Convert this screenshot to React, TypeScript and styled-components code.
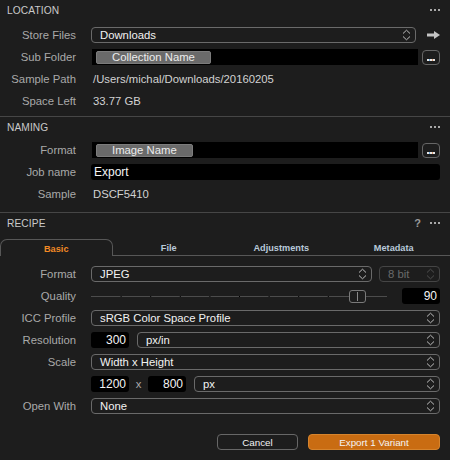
import styled, { createGlobalStyle } from "styled-components";

const GlobalStyle = createGlobalStyle`
  html, body {
    margin: 0;
    padding: 0;
    background: #1d1d1d;
  }
  body {
    font-family: "Liberation Sans", Arial, sans-serif;
    -webkit-font-smoothing: antialiased;
  }
  * {
    box-sizing: border-box;
  }
`;

const Panel = styled.div`
  width: 450px;
  height: 460px;
  background: #1d1d1d;
  display: flex;
  flex-direction: column;
  overflow: hidden;
`;

const Section = styled.section<{ $padBottom: number; $first?: boolean }>`
  border-top: ${(p) => (p.$first ? "none" : "1px solid #464646")};
  padding-bottom: ${(p) => p.$padBottom}px;
`;

const SectionHeader = styled.div`
  height: 20px;
  display: flex;
  align-items: center;
  justify-content: space-between;
  padding: 0 10px 0 7px;
`;

const SectionTitle = styled.span`
  font-size: 10.2px;
  color: #c9c9c9;
  letter-spacing: 0.1px;
`;

const HeaderIcons = styled.div`
  display: flex;
  align-items: center;
  gap: 9px;
`;

const Help = styled.span`
  font-size: 11px;
  font-weight: bold;
  color: #9a9a9a;
`;

const Rows = styled.div<{ $padTop: number }>`
  display: flex;
  flex-direction: column;
  gap: 6px;
  padding: ${(p) => p.$padTop}px 10px 0 0;
`;

const Row = styled.div`
  display: grid;
  grid-template-columns: 76px 1fr;
  column-gap: 15px;
  height: 16px;
  align-items: center;
`;

const Label = styled.span`
  text-align: right;
  font-size: 11.3px;
  color: #a9a9a9;
  white-space: nowrap;
`;

const Controls = styled.div<{ $gap?: number; $inset?: number }>`
  flex: 1 1 auto;
  display: flex;
  align-items: center;
  gap: ${(p) => p.$gap ?? 0}px;
  margin-left: ${(p) => p.$inset ?? 0}px;
  height: 16px;
  min-width: 0;
`;

const Value = styled.span`
  font-size: 11.3px;
  color: #d2d2d2;
  padding-left: 2px;
  white-space: nowrap;
`;

const SelectBox = styled.div<{ $width?: number; $disabled?: boolean }>`
  flex: ${(p) => (p.$width ? `0 0 ${p.$width}px` : "1 1 auto")};
  height: 16px;
  border: 1px solid ${(p) => (p.$disabled ? "#454545" : "#6a6a6a")};
  border-radius: 4px;
  display: flex;
  align-items: center;
  justify-content: space-between;
  padding: 0 4px 0 8px;
  font-size: 11.3px;
  color: ${(p) => (p.$disabled ? "#6a6a6a" : "#f2f2f2")};
  white-space: nowrap;
  min-width: 0;
`;

const Field = styled.div<{ $width?: number; $align?: "left" | "right" }>`
  flex: ${(p) => (p.$width ? `0 0 ${p.$width}px` : "1 1 auto")};
  height: 16px;
  background: #000;
  border-radius: 3px;
  display: flex;
  align-items: center;
  justify-content: ${(p) => (p.$align === "right" ? "flex-end" : "flex-start")};
  padding: 0 3px;
  font-size: 12px;
  color: #f4f4f4;
  white-space: nowrap;
`;

const TokenField = styled.div`
  flex: 1 1 auto;
  height: 16px;
  background: #000;
  display: flex;
  align-items: center;
  padding: 0 4px;
  margin-left: 1px;
`;

const Token = styled.span`
  height: 13px;
  display: inline-flex;
  align-items: center;
  padding: 0 15px;
  background: #6a6a6a;
  border: 1px solid #7c7c7c;
  border-radius: 2px;
  font-size: 11.3px;
  color: #ececec;
  white-space: nowrap;
`;

const MoreButton = styled.div`
  flex: 0 0 18px;
  height: 15px;
  border: 1px solid #666;
  border-radius: 4px;
  display: flex;
  align-items: flex-end;
  justify-content: center;
  padding-bottom: 3px;
`;

const IconSlot = styled.div`
  flex: 0 0 24px;
  display: flex;
  justify-content: flex-end;
  align-items: center;
`;

const TabBar = styled.div`
  margin-top: 6px;
  display: grid;
  grid-template-columns: repeat(4, 1fr);
  height: 17px;
`;

const Tab = styled.div<{ $active?: boolean }>`
  display: flex;
  align-items: center;
  justify-content: center;
  font-size: 9.2px;
  font-weight: bold;
  color: ${(p) => (p.$active ? "#f28a25" : "#b8c9da")};
  border: ${(p) => (p.$active ? "1px solid #575757" : "none")};
  border-bottom: ${(p) => (p.$active ? "none" : "1px solid #575757")};
  border-radius: ${(p) => (p.$active ? "7px 7px 0 0" : "0")};
  padding-top: 1px;
`;

const SliderTrack = styled.div`
  flex: 1 1 auto;
  height: 16px;
  position: relative;
  display: flex;
  align-items: center;
`;

const Thumb = styled.div`
  position: absolute;
  top: 2px;
  width: 17px;
  height: 13px;
  border: 1px solid #7a7a7a;
  border-radius: 3px;
  background: #1d1d1d;
  display: flex;
  justify-content: center;
  align-items: center;

  &::after {
    content: "";
    width: 1px;
    height: 9px;
    background: #8a8a8a;
  }
`;

const Times = styled.span`
  flex: 0 0 19px;
  text-align: center;
  font-size: 11.3px;
  color: #a9a9a9;
`;

const Footer = styled.div`
  margin-top: 20px;
  display: flex;
  justify-content: flex-end;
  gap: 10px;
  padding-right: 10px;
`;

const Button = styled.div<{ $primary?: boolean }>`
  width: ${(p) => (p.$primary ? 132 : 81)}px;
  height: 16px;
  border-radius: 4px;
  border: 1px solid ${(p) => (p.$primary ? "#d6842d" : "#676767")};
  background: ${(p) => (p.$primary ? "#c96c12" : "transparent")};
  display: flex;
  align-items: center;
  justify-content: center;
  font-size: 9.8px;
  color: #f4f4f4;
`;

const Dots = () => (
  <svg width="10" height="2" viewBox="0 0 10 2">
    <rect x="0" y="0" width="2" height="2" fill="#a8a8a8" />
    <rect x="4" y="0" width="2" height="2" fill="#a8a8a8" />
    <rect x="8" y="0" width="2" height="2" fill="#a8a8a8" />
  </svg>
);

const Chevrons = ({ color = "#bdbdbd" }: { color?: string }) => (
  <svg width="9" height="12" viewBox="0 0 9 12">
    <path d="M1 4.5 L4.5 1.2 L8 4.5 M1 7.5 L4.5 10.8 L8 7.5" fill="none" stroke={color} strokeWidth="1" />
  </svg>
);

const ArrowRight = () => (
  <svg width="13" height="8" viewBox="0 0 13 8">
    <path d="M0 2.5 H7 V0 L13 4 L7 8 V5.5 H0 Z" fill="#c4c4c4" />
  </svg>
);

const Ellipsis = () => (
  <svg width="8" height="2" viewBox="0 0 8 2">
    <rect x="0" y="0" width="8" height="2" fill="#e8e8e8" />
    <rect x="2" y="0" width="1" height="2" fill="#6fa8d8" />
    <rect x="5" y="0" width="1" height="2" fill="#d89a6f" />
  </svg>
);

const SliderLine = ({ ticks }: { ticks: number }) => (
  <svg width="100%" height="3" preserveAspectRatio="none" viewBox="0 0 296 3">
    <rect x="0" y="1" width="296" height="1" fill="#4c4c4c" />
    {Array.from({ length: ticks }, (_, i) => (
      <rect key={i} x={29.6 * (i + 1)} y="1" width="1" height="1" fill="#000" />
    ))}
  </svg>
);

const Select = ({ value, width, disabled }: { value: string; width?: number; disabled?: boolean }) => (
  <SelectBox $width={width} $disabled={disabled}>
    <span>{value}</span>
    <Chevrons color={disabled ? "#4e4e4e" : "#bdbdbd"} />
  </SelectBox>
);

const tabs = ["Basic", "File", "Adjustments", "Metadata"];

const App = () => {
  const quality = 90;
  const thumbPos = (quality - 6) / 96.4;

  return (
    <Panel>
      <GlobalStyle />

      <Section $first $padBottom={7}>
        <SectionHeader>
          <SectionTitle>LOCATION</SectionTitle>
          <HeaderIcons>
            <Dots />
          </HeaderIcons>
        </SectionHeader>
        <Rows $padTop={7}>
          <Row>
            <Label>Store Files</Label>
            <Controls>
              <Select value="Downloads" />
              <IconSlot>
                <ArrowRight />
              </IconSlot>
            </Controls>
          </Row>
          <Row>
            <Label>Sub Folder</Label>
            <Controls $gap={4}>
              <TokenField>
                <Token>Collection Name</Token>
              </TokenField>
              <MoreButton>
                <Ellipsis />
              </MoreButton>
            </Controls>
          </Row>
          <Row>
            <Label>Sample Path</Label>
            <Value>/Users/michal/Downloads/20160205</Value>
          </Row>
          <Row>
            <Label>Space Left</Label>
            <Value>33.77 GB</Value>
          </Row>
        </Rows>
      </Section>

      <Section $padBottom={10}>
        <SectionHeader>
          <SectionTitle>NAMING</SectionTitle>
          <HeaderIcons>
            <Dots />
          </HeaderIcons>
        </SectionHeader>
        <Rows $padTop={5}>
          <Row>
            <Label>Format</Label>
            <Controls $gap={4}>
              <TokenField>
                <Token>Image Name</Token>
              </TokenField>
              <MoreButton>
                <Ellipsis />
              </MoreButton>
            </Controls>
          </Row>
          <Row>
            <Label>Job name</Label>
            <Controls>
              <Field>Export</Field>
            </Controls>
          </Row>
          <Row>
            <Label>Sample</Label>
            <Value>DSCF5410</Value>
          </Row>
        </Rows>
      </Section>

      <Section $padBottom={0}>
        <SectionHeader>
          <SectionTitle>RECIPE</SectionTitle>
          <HeaderIcons>
            <Help>?</Help>
            <Dots />
          </HeaderIcons>
        </SectionHeader>
        <TabBar>
          {tabs.map((t, i) => (
            <Tab key={t} $active={i === 0}>
              {t}
            </Tab>
          ))}
        </TabBar>
        <Rows $padTop={10}>
          <Row>
            <Label>Format</Label>
            <Controls $gap={7}>
              <Select value="JPEG" />
              <Select value="8 bit" width={61} disabled />
            </Controls>
          </Row>
          <Row>
            <Label>Quality</Label>
            <Controls $gap={15}>
              <SliderTrack>
                <SliderLine ticks={8} />
                <Thumb style={{ left: `${thumbPos * 100}%` }} />
              </SliderTrack>
              <Field $width={38} $align="right">
                {quality}
              </Field>
            </Controls>
          </Row>
          <Row>
            <Label>ICC Profile</Label>
            <Controls>
              <Select value="sRGB Color Space Profile" />
            </Controls>
          </Row>
          <Row>
            <Label>Resolution</Label>
            <Controls $gap={8}>
              <Field $width={38} $align="right">
                300
              </Field>
              <Select value="px/in" />
            </Controls>
          </Row>
          <Row>
            <Label>Scale</Label>
            <Controls>
              <Select value="Width x Height" />
            </Controls>
          </Row>
          <Row>
            <span />
            <Controls>
              <Field $width={38} $align="right">
                1200
              </Field>
              <Times>x</Times>
              <Field $width={38} $align="right">
                800
              </Field>
              <Controls $inset={8}>
                <Select value="px" />
              </Controls>
            </Controls>
          </Row>
          <Row>
            <Label>Open With</Label>
            <Controls>
              <Select value="None" />
            </Controls>
          </Row>
        </Rows>
        <Footer>
          <Button>Cancel</Button>
          <Button $primary>Export 1 Variant</Button>
        </Footer>
      </Section>
    </Panel>
  );
};

export default App;
